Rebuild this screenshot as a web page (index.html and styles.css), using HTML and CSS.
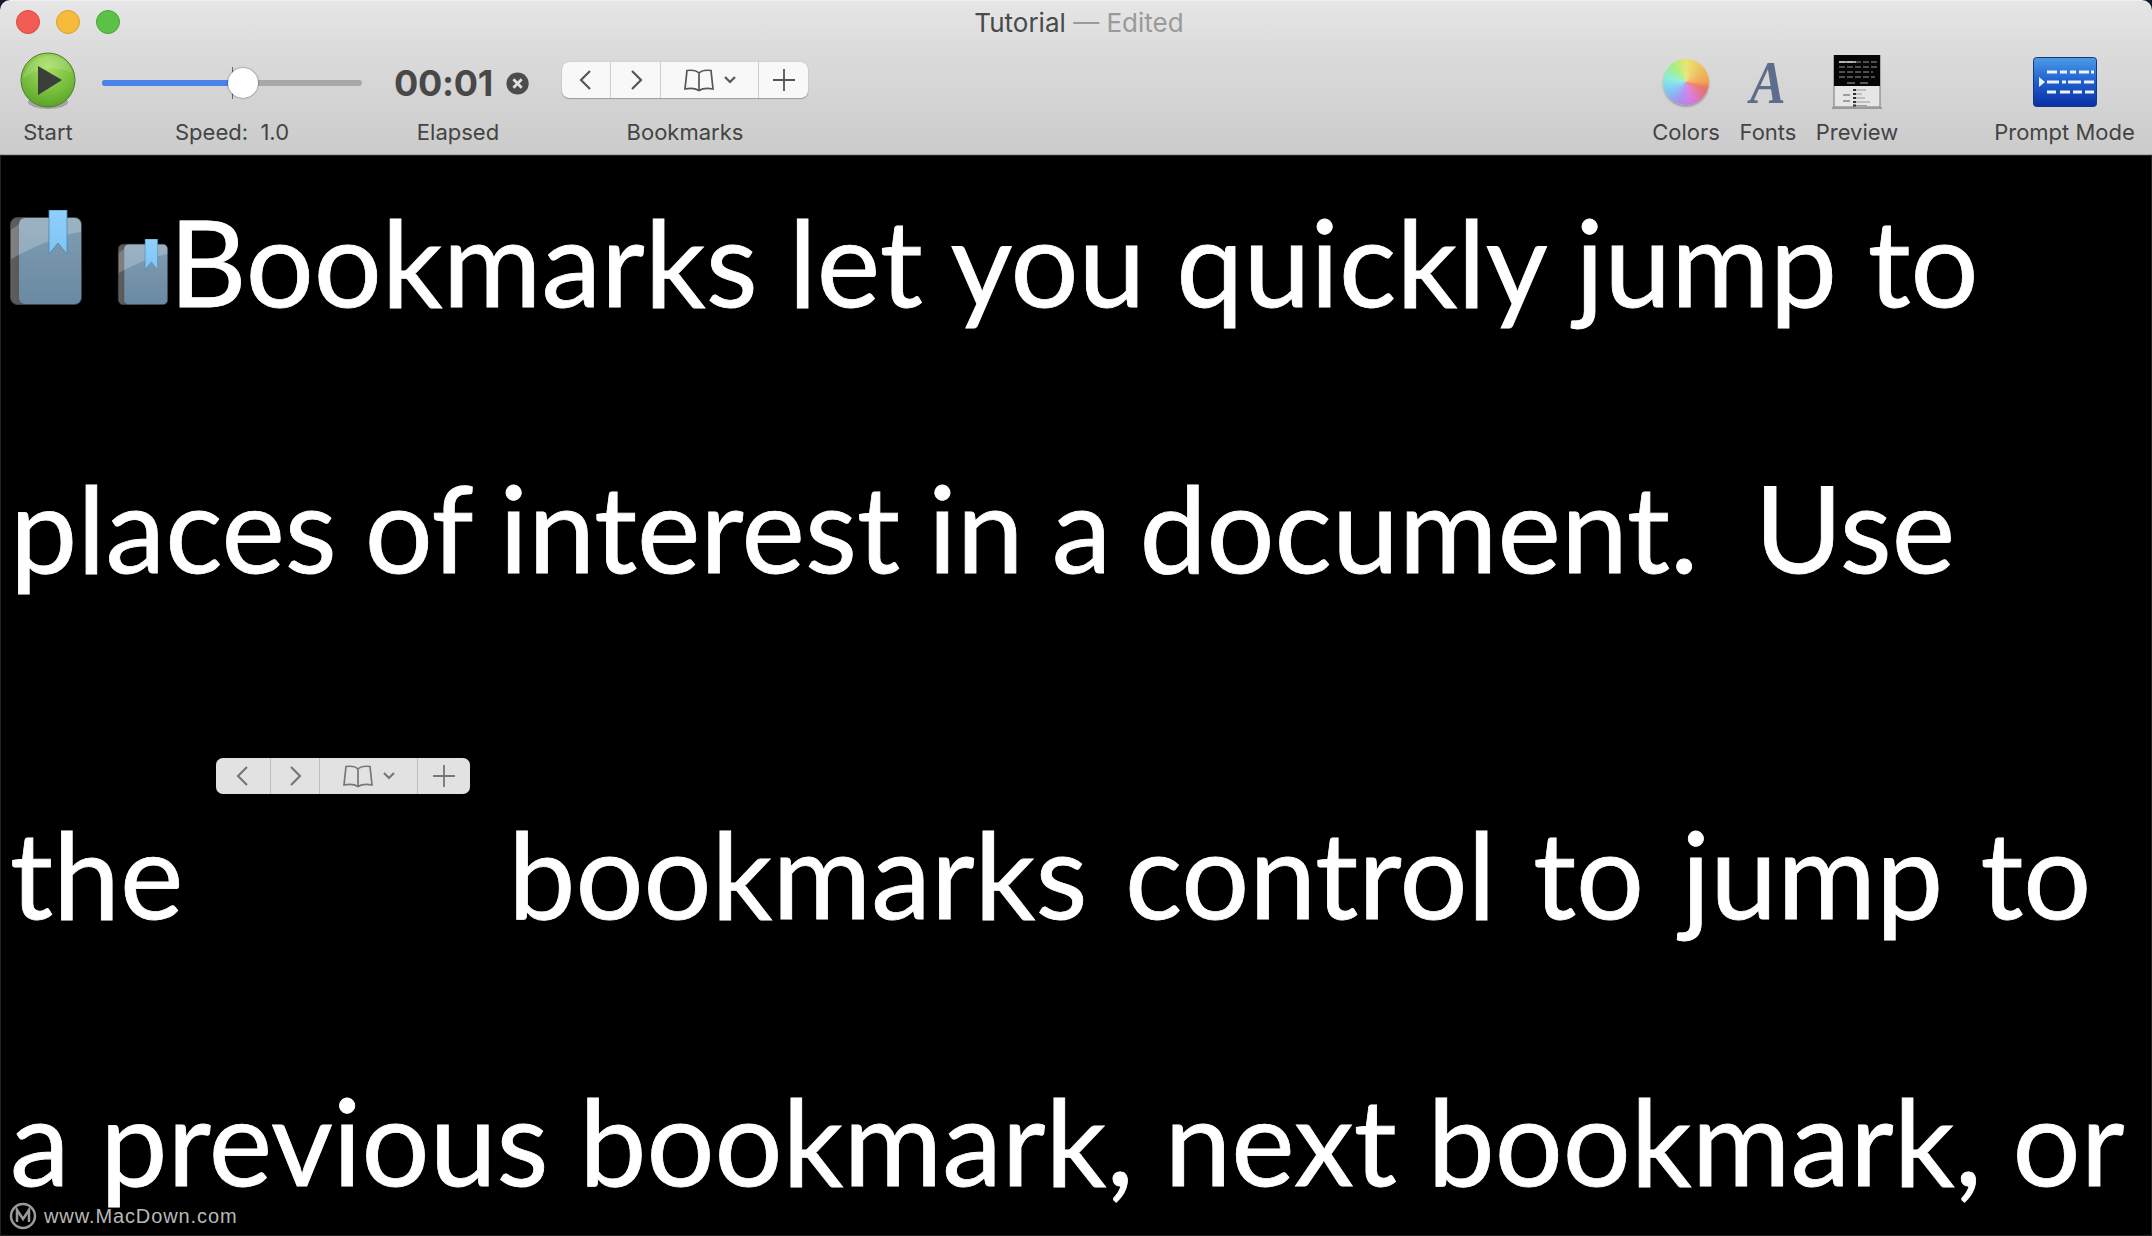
FILE: index.html
```html
<!DOCTYPE html>
<html lang="en">
<head>
<meta charset="utf-8">
<title>Tutorial — Edited</title>
<link rel="stylesheet" href="styles.css">
</head>
<body>
<svg class="defs" width="0" height="0" aria-hidden="true">
  <defs>
    <linearGradient id="cover" x1="0" y1="0" x2="0" y2="1"><stop offset="0" stop-color="#7f9db2"/><stop offset="1" stop-color="#6a8aa3"/></linearGradient>
    <linearGradient id="spine" x1="0" y1="0" x2="1" y2="0"><stop offset="0" stop-color="#5f5f5f"/><stop offset="1" stop-color="#262626"/></linearGradient>
    <linearGradient id="ribbon" x1="0" y1="0" x2="0" y2="1"><stop offset="0" stop-color="#8fd0fb"/><stop offset="1" stop-color="#7dc4f5"/></linearGradient>
    <radialGradient id="ball" cx=".5" cy=".25" r=".85"><stop offset="0" stop-color="#a9df62"/><stop offset=".6" stop-color="#74bb3a"/><stop offset="1" stop-color="#4f9a22"/></radialGradient>
    <linearGradient id="prompt" x1="0" y1="0" x2="0" y2="1"><stop offset="0" stop-color="#4d9be8"/><stop offset=".5" stop-color="#1f5fcc"/><stop offset="1" stop-color="#0a2fa6"/></linearGradient>
    <symbol id="book" viewBox="0 0 72 95">
      <rect x=".5" y="7.500" width="71" height="87" rx="7" fill="url(#spine)" stroke="#444"/>
      <rect x="9" y="8" width="62" height="86" rx="6" fill="url(#cover)"/>
      <path d="M9 14a6 6 0 0 1 6-6h50a6 6 0 0 1 6 6v8C50 25 25 36 1 49V20L9 14z" fill="#fff" opacity=".22"/>
      <path d="M39 0h18v44l-9-11-9 11z" fill="url(#ribbon)" stroke="#4f86ad" stroke-width=".8"/>
    </symbol>
    <symbol id="chev-l" viewBox="0 0 20 24"><path d="M14 3 5 12l9 9" fill="none" stroke="currentColor" stroke-width="2.200"/></symbol>
    <symbol id="chev-r" viewBox="0 0 20 24"><path d="m6 3 9 9-9 9" fill="none" stroke="currentColor" stroke-width="2.200"/></symbol>
    <symbol id="open-book" viewBox="0 0 32 24"><path d="M16 5C13 2 8 2 4 2.500L2 21c5-1 10-1 14 1.500 4-2.500 9-2.500 14-1.500L28 2.500C24 2 19 2 16 5zm0 0v17" fill="none" stroke="currentColor" stroke-width="1.700"/></symbol>
    <symbol id="caret" viewBox="0 0 14 10"><path d="m2 2 5 5 5-5" fill="none" stroke="currentColor" stroke-width="2.200"/></symbol>
    <symbol id="plus" viewBox="0 0 26 26"><path d="M13 2v22M2 13h22" fill="none" stroke="currentColor" stroke-width="1.800"/></symbol>
  </defs>
</svg>
<div class="window">
  <header class="toolbar">
    <div class="titlebar">
      <div class="lights">
        <span class="light light-red"></span>
        <span class="light light-yellow"></span>
        <span class="light light-green"></span>
      </div>
      <div class="title">Tutorial <span class="title-dim">— Edited</span></div>
    </div>
    <div class="tools">
      <div class="tool tool-start">
        <div class="slot">
          <svg width="58" height="60" viewBox="0 0 58 60">
            <ellipse cx="29" cy="50" rx="20" ry="7" fill="#000" opacity=".22"/>
            <circle cx="29" cy="28" r="27" fill="url(#ball)" stroke="#4d7f2c"/>
            <path d="M4 26C8 8 26-2 44 7c5 3 8 8 9 14C36 13 20 16 4 26z" fill="#fff" opacity=".14"/>
            <path d="M19 14 43 28 19 43z" fill="#3b3f3a"/>
          </svg>
        </div>
        <div class="label">Start</div>
      </div>
      <div class="tool tool-speed">
        <div class="slot slot-slider">
          <div class="slider">
            <div class="slider-fill"></div>
            <div class="slider-tick"></div>
            <div class="slider-thumb"></div>
          </div>
        </div>
        <div class="label">Speed:&nbsp; 1.0</div>
      </div>
      <div class="tool tool-elapsed">
        <div class="slot slot-time">
          <span class="time">00:01</span>
          <svg class="clear" width="25" height="25" viewBox="0 0 25 25"><circle cx="12.500" cy="12.500" r="12" fill="#4c4c4c"/><path d="m8 8 9 9m0-9-9 9" stroke="#e0e0e0" stroke-width="3" fill="none"/></svg>
        </div>
        <div class="label">Elapsed</div>
      </div>
      <div class="tool tool-bookmarks">
        <div class="slot">
          <div class="bm bm-main">
            <span class="bm-cell bm-prev"><svg width="20" height="24"><use href="#chev-l"/></svg></span>
            <span class="bm-cell bm-next"><svg width="20" height="24"><use href="#chev-r"/></svg></span>
            <span class="bm-cell bm-menu"><svg width="32" height="24"><use href="#open-book"/></svg><svg width="14" height="10"><use href="#caret"/></svg></span>
            <span class="bm-cell bm-add"><svg width="26" height="26"><use href="#plus"/></svg></span>
          </div>
        </div>
        <div class="label">Bookmarks</div>
      </div>
      <div class="spacer"></div>
      <div class="tool tool-colors">
        <div class="slot"><div class="wheel"></div></div>
        <div class="label">Colors</div>
      </div>
      <div class="tool tool-fonts">
        <div class="slot"><span class="font-a">A</span></div>
        <div class="label">Fonts</div>
      </div>
      <div class="tool tool-preview">
        <div class="slot">
          <svg width="50" height="54" viewBox="0 0 50 54">
            <rect x="2" y="0" width="46" height="52" fill="#e6e6e6" stroke="#777"/>
            <rect x="2" y="0" width="46" height="31" fill="#050505"/>
            <path d="M7 7h40M7 12h38M7 17h34M7 22h36" stroke="#999" stroke-width="1" stroke-dasharray="6 2"/>
            <path d="M7 7h17" stroke="#eee" stroke-width="1.300"/>
            <path d="M15 28h8M28 28h8" stroke="#aaa" stroke-width="1.200"/>
            <path d="M21 35h13M21 39h9M21 43h12M21 47h17M21 50.500h14" stroke="#999" stroke-width="1"/>
            <path d="M21 35h3M21 39h3M21 43h3M21 47h3M21 50.500h3" stroke="#333" stroke-width="2"/>
            <path d="M11 40h7M11 46h7" stroke="#555" stroke-width="1.200"/>
            <rect x="0" y="52" width="50" height="2" fill="#999"/>
          </svg>
        </div>
        <div class="label">Preview</div>
      </div>
      <div class="tool tool-prompt">
        <div class="slot">
          <svg width="64" height="50" viewBox="0 0 64 50">
            <rect x=".5" y=".5" width="63" height="49" rx="3" fill="url(#prompt)" stroke="#123a78"/>
            <path d="M14 15h10M27 15h7M37 15h6M46 15h10M58 15h3M14 25h12M29 25h4M35 25h13M51 25h10M14 35h9M27 35h10M40 35h9M52 35h9" stroke="#eaf3ff" stroke-width="3"/>
            <path d="M6 20 12 25 6 30z" fill="#eaf3ff"/>
          </svg>
        </div>
        <div class="label">Prompt Mode</div>
      </div>
    </div>
  </header>
  <main class="content">
    <p class="line line-first"><svg class="book-big" width="72" height="95"><use href="#book"/></svg><svg class="book-small" width="52" height="66"><use href="#book"/></svg>Bookmarks let you quickly jump to</p>
    <p class="line line-second">places of interest in a document.&nbsp; Use</p>
    <p class="line line-third">the<span class="bm bm-inline">
      <span class="bm-cell bm-prev"><svg width="20" height="24"><use href="#chev-l"/></svg></span>
      <span class="bm-cell bm-next"><svg width="20" height="24"><use href="#chev-r"/></svg></span>
      <span class="bm-cell bm-menu"><svg width="32" height="24"><use href="#open-book"/></svg><svg width="14" height="10"><use href="#caret"/></svg></span>
      <span class="bm-cell bm-add"><svg width="26" height="26"><use href="#plus"/></svg></span>
    </span>bookmarks control to jump to</p>
    <p class="line">a previous bookmark, next bookmark, or</p>
    <div class="watermark">
      <svg width="28" height="28" viewBox="0 0 28 28"><circle cx="14" cy="14" r="12" fill="none" stroke="#9a9a9a" stroke-width="2.500"/><path d="M8 20V8l6 9 6-9v12" fill="none" stroke="#9a9a9a" stroke-width="2.500"/></svg>
      <span>www.MacDown.com</span>
    </div>
  </main>
</div>
</body>
</html>
```
FILE: styles.css
```css
* { box-sizing: border-box; }
html, body { margin: 0; height: 100%; background: #141c2c; }
body { overflow: hidden; font-family: Inter, "Liberation Sans", sans-serif; }
.defs { position: absolute; }

.window {
  height: 1236px;
  display: flex;
  flex-direction: column;
  background: #000;
  border-radius: 10px 10px 0 0;
  overflow: hidden;
}

.toolbar {
  flex: 0 0 155px;
  background: linear-gradient(#e6e6e6, #dcdcdc 30%, #cbcbcb);
  border-top: 1px solid #f0f0f0;
  border-bottom: 1px solid #a8a8a8;
  display: flex;
  flex-direction: column;
}

.titlebar {
  flex: 0 0 44px;
  position: relative;
  display: flex;
  align-items: center;
  justify-content: center;
  padding-bottom: 2px;
}
.lights { position: absolute; left: 16px; top: 9px; display: flex; gap: 16px; }
.light { width: 24px; height: 24px; border-radius: 50%; }
.light-red { background: #f25c55; border: 1px solid #d9493f; }
.light-yellow { background: #f6bb3b; border: 1px solid #d9a02c; }
.light-green { background: #5cc245; border: 1px solid #46a634; }
.title { font-size: 26px; color: #4a4a4a; padding-left: 6px; }
.title-dim { color: #9a9a9a; }

.tools { flex: 1; display: flex; padding: 0 17px 0 18px; }
.tool { display: flex; flex-direction: column; align-items: center; }
.slot { height: 74px; display: flex; align-items: center; justify-content: center; }
.label { font-size: 22px; line-height: 26px; color: #444; white-space: nowrap; }
.spacer { flex: 1; }

.tool-start { width: 60px; }
.tool-speed { width: 260px; margin-left: 24px; }
.tool-elapsed { width: 142px; margin-left: 25px; }
.tool-bookmarks { width: 246px; margin-left: 33px; }
.tool-bookmarks .slot { padding-bottom: 4px; }
.tool-colors { width: 68px; }
.tool-fonts { width: 56px; margin-left: 20px; }
.tool-preview { width: 80px; margin-left: 21px; }
.tool-prompt { width: 141px; margin-left: 97px; }

.slot-slider { padding-top: 2px; }
.slider { position: relative; width: 260px; height: 6px; border-radius: 3px; background: #a8a8a8; }
.slider-fill { width: 141px; height: 6px; border-radius: 3px; background: #4c80ea; }
.slider-tick { position: absolute; left: 130px; top: -13px; width: 1px; height: 32px; background: #666; }
.slider-thumb {
  position: absolute;
  left: 126px;
  top: -12px;
  width: 30px;
  height: 30px;
  border-radius: 50%;
  background: #fff;
  box-shadow: 0 0 2px rgba(0, 0, 0, .6);
}

.slot-time { gap: 13px; padding-top: 2px; justify-content: flex-start; width: 100%; padding-left: 7px; }
.time { font-size: 36px; font-weight: 700; color: #484848; letter-spacing: -.3px; }

.bm {
  display: inline-flex;
  width: 246px;
  height: 36px;
  border-radius: 7px;
  background: #f8f8f8;
  color: #555;
  box-shadow: 0 1px 1px rgba(0, 0, 0, .25), 0 0 1px rgba(0, 0, 0, .3);
}
.bm-cell { display: flex; align-items: center; justify-content: center; gap: 8px; border-right: 1px solid #cfcfcf; }
.bm-prev { width: 49px; }
.bm-next { width: 50px; }
.bm-menu { width: 98px; }
.bm-add { flex: 1; border-right: 0; }

.bm-inline {
  width: 254px;
  background: #e2e2e2;
  color: #777;
  margin: 75px 38px 0 33px;
  vertical-align: 131px;
  box-shadow: none;
}
.bm-inline .bm-cell { border-right-color: #bdbdbd; }
.bm-inline .bm-prev { width: 55px; }
.bm-inline .bm-next { width: 49px; }

.wheel {
  width: 46px;
  height: 46px;
  border-radius: 50%;
  background:
    radial-gradient(circle, rgba(255, 255, 255, .2), rgba(255, 255, 255, 0) 70%),
    conic-gradient(from 0deg, #e8e46a, #f0a04a 25%, #e8705f 30%, #d872e0 45%, #a58cf0 55%, #79c8f4 68%, #86ecd8 78%, #a4ee7a 90%, #e8e46a);
  box-shadow: 0 2px 2px rgba(0, 0, 0, .25);
}
.font-a {
  display: inline-block;
  font-family: "Liberation Serif", serif;
  font-style: italic;
  font-weight: 700;
  font-size: 62px;
  line-height: 62px;
  color: #5d6d8c;
  transform: scaleX(.86);
}

.content {
  flex: 1;
  min-height: 0;
  position: relative;
  overflow: hidden;
  color: #fff;
  font-family: Lato, "Noto Sans", sans-serif;
  font-size: 120px;
  -webkit-text-stroke: .8px #fff;
  box-shadow: inset 0 0 0 1px #222;
}
.line { margin: 0 0 46px; padding-left: 10px; line-height: 220px; white-space: nowrap; }
.line-first { margin-top: -4px; }
.line-second { word-spacing: -2.7px; }
.line-third { word-spacing: 6.7px; margin-bottom: 47px; }
.book-small { margin-left: 35px; }
.book-big, .book-small { vertical-align: baseline; position: relative; top: -2px; }

.watermark {
  position: absolute;
  left: 9px;
  bottom: 6px;
  display: flex;
  align-items: center;
  gap: 7px;
  font-family: "Liberation Sans", sans-serif;
  font-size: 20px;
  line-height: 28px;
  letter-spacing: .9px;
  color: #b8b8b8;
  -webkit-text-stroke: 0;
}
```
